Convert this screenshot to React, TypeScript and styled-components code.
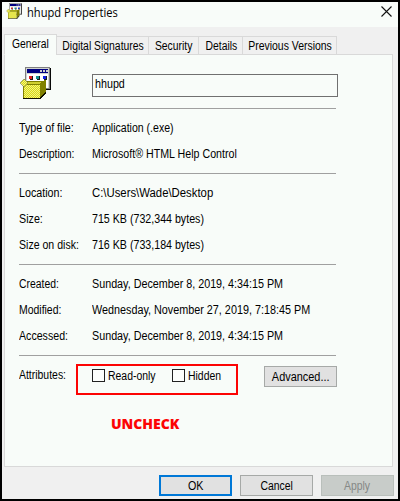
import React from "react";
import styled, { createGlobalStyle } from "styled-components";

const Global = createGlobalStyle`
  *{box-sizing:border-box}
  html,body{margin:0;padding:0}
  body{width:400px;height:501px;overflow:hidden;background:#000;font-family:"Liberation Sans",Arial,sans-serif;font-size:12px;color:#000}
`;
const Window = styled.main`
  width:400px;height:501px;border:2px solid #000;background:#f0f0f0;
  display:flex;flex-direction:column;
`;
const TitleBar = styled.header`
  height:25px;background:#f8fcf9;display:flex;align-items:flex-start;
  padding:1px 6px 0 4px;flex:none;
`;
const Title = styled.h1`
  margin:0 auto 0 5px;font:400 12.5px/19px "Open Sans","Segoe UI",sans-serif;
  color:#000;white-space:nowrap;transform:scaleX(.89);transform-origin:left;
`;
const CloseButton = styled.button`
  border:0;background:none;padding:0;margin-top:3px;height:11px;display:flex;
`;
const Label = styled.span<{ $scale?: number; $centered?: boolean }>`
  display:inline-block;white-space:nowrap;transform:scaleX(${p => p.$scale ?? 0.893});
  transform-origin:${p => (p.$centered ? "center" : "left")};
`;
const Tabs = styled.nav`
  display:flex;align-items:flex-end;height:21px;margin:7px 0 -1px 2px;flex:none;position:relative;
`;
const Tab = styled.button<{ $width: number; $active?: boolean }>`
  width:${p => p.$width}px;height:${p => (p.$active ? 21 : 19)}px;
  margin:0 -1px 0 0;padding:${p => (p.$active ? "0 1px 2px 0" : "1px 0 0 1px")};
  border:1px solid #d9d9d9;${p => p.$active && "border-bottom-color:#f8fcf9;"}
  background:${p => (p.$active ? "#f8fcf9" : "#f0f0f0")};
  font:inherit;color:inherit;display:flex;align-items:center;justify-content:center;
`;
const Panel = styled.section`
  width:389px;height:413px;margin-left:2px;padding:12px 0 0 14px;flex:none;
  border:1px solid #d9d9d9;background:#f8fcf9;
`;
const FileHead = styled.div`
  display:flex;height:41px;width:319px;
`;
const NameInput = styled.div`
  width:246px;height:23px;margin:7px 0 0 41px;border:1px solid #707070;
  padding:1px 0 0 2px;line-height:16px;
`;
const Rule = styled.hr`
  width:317px;height:1px;margin:0;border:0;background:#a0a0a0;
`;
const Group = styled.dl<{ $height: number; $top: number }>`
  margin:0;height:${p => p.$height}px;padding-top:${p => p.$top}px;
`;
const Row = styled.div`
  display:grid;grid-template-columns:73px 1fr;height:26px;line-height:14px;
`;
const Term = styled.dt`margin:0;`;
const Value = styled.dd`margin:0;`;
const Attributes = styled.div`
  display:flex;padding-top:8px;align-items:flex-start;
`;
const AttributeName = styled.div`width:57px;line-height:14px;padding-top:4px;`;
const Highlight = styled.div`
  width:162px;height:31px;border:2px solid #fc0404;display:flex;padding:3px 0 0 14px;
`;
const Option = styled.label<{ $width: number }>`
  width:${p => p.$width}px;height:13px;display:flex;align-items:center;gap:3px;line-height:13px;
  span:last-child{padding-top:1px}
`;
const Box = styled.span`
  width:13px;height:13px;border:1px solid #222;background:#fdfffd;flex:none;
`;
const Button = styled.button<{ $kind?: "default" | "disabled" }>`
  width:73px;height:21px;padding:1px 0 0;font:inherit;flex:none;
  display:flex;align-items:center;justify-content:center;
  border:${p => (p.$kind === "default" ? "2px solid #0078d7" : p.$kind === "disabled" ? "1px solid #b9bfbb" : "1px solid #a6a9a7")};
  background:${p => (p.$kind === "disabled" ? "#c8ccc9" : "#e1e1e1")};
  color:${p => (p.$kind === "disabled" ? "#858886" : "#000")};
`;
const AdvancedSlot = styled.div`margin:2px 0 0 26px;`;
const Note = styled.strong`
  display:block;width:68px;margin:19px 0 0 92px;color:#fc0404;
  font:800 14px/20px "Open Sans","Noto Sans",sans-serif;white-space:nowrap;
`;
const Footer = styled.footer`
  display:flex;justify-content:flex-end;gap:8px;padding:8px 4px 0 0;
`;

function InstallerIcon({ size, id }: { size: number; id: string }) {
  return (
    <svg width={size} height={size} viewBox="0 0 32 32" shapeRendering={size === 32 ? "crispEdges" : "auto"}>
      <defs>
        <pattern id={id} width="2" height="2" patternUnits="userSpaceOnUse">
          <path fill="#d8d818" d="M0 0h2v2H0z" />
          <path fill="#f4f480" d="M0 0h1v1H0zM1 1h1v1H1z" />
        </pattern>
      </defs>
      <path fill="#080808" d="M7 1h25v22H7z" />
      <path fill="#808080" d="M6 0h25v22H6z" />
      <path fill="#d0d4d0" d="M7 1h23v20H7z" />
      <path fill="#fff" d="M8 7h21v14H8z" />
      <path fill="#000080" d="M8 2h21v4H8z" />
      <path fill="#d0d0d0" d="M21 3h2v2h-2zM24 3h2v2h-2zM27 3h2v2h-2z" />
      <path fill="#e02020" d="M10 9h3v3h-3z" />
      <path fill="#109090" d="M17 9h3v3h-3z" />
      <path fill="#1020e0" d="M24 9h3v3h-3z" />
      <path fill="#181818" d="M13 9h1v4h-3v-1h2zM20 9h1v4h-3v-1h2zM27 9h1v4h-3v-1h2z" />
      <path fill="#808080" d="M9 14h5v1H9zM16 14h5v1h-5zM23 14h3v1h-3z" />
      <path fill="#808000" d="M4 17l5-3h17l-5 3z" />
      <path fill="#d0d030" d="M9 15h14l-3 2H7z" />
      <path fill={`url(#${id})`} d="M4 17h17v14H4z" />
      <path fill="#808000" d="M4 17h17v1H4zM4 17h1v14H4z" />
      <path fill="#808000" d="M21 17l4-4h2v11l-6 7z" />
      <path fill="#101000" d="M4 31h17l6-7v2l-5 6H4z" />
      <path fill={`url(#${id})`} stroke="#808040" strokeWidth=".7" d="M5 12l4 4-4 4-4-4z" />
    </svg>
  );
}

type Entry = [term: string, value: string, scale?: number, termScale?: number];

const fileInfo: Entry[] = [["Type of file:", "Application (.exe)", 0.88], ["Description:", "Microsoft® HTML Help Control", 0.888, 0.875]];
const sizeInfo: Entry[] = [["Location:", "C:\\Users\\Wade\\Desktop", 0.945], ["Size:", "715 KB (732,344 bytes)", 0.888], ["Size on disk:", "716 KB (733,184 bytes)", 0.888, 0.88]];
const dateInfo: Entry[] = [["Created:", "Sunday, December 8, 2019, 4:34:15 PM", 0.896, 0.865], ["Modified:", "Wednesday, November 27, 2019, 7:18:45 PM", 0.9, 0.87], ["Accessed:", "Sunday, December 8, 2019, 4:34:15 PM", 0.896, 0.885]];

function Details({ rows, height, top }: { rows: Entry[]; height: number; top: number }) {
  return (
    <Group $height={height} $top={top}>
      {rows.map(([term, value, scale, termScale]) => (
        <Row key={term}><Term><Label $scale={termScale}>{term}</Label></Term><Value><Label $scale={scale}>{value}</Label></Value></Row>
      ))}
    </Group>
  );
}

export default function App() {
  return (
    <>
      <Global />
      <Window>
        <TitleBar>
          <InstallerIcon size={16} id="smallDither" />
          <Title>hhupd Properties</Title>
          <CloseButton aria-label="Close">
            <svg width="11" height="11" viewBox="0 0 11 11"><path d="M.5.5l10 10m0-10l-10 10" stroke="#111" strokeWidth="1.1" /></svg>
          </CloseButton>
        </TitleBar>
        <Tabs>
          <Tab $width={53} $active><Label $centered $scale={0.86}>General</Label></Tab>
          <Tab $width={93}><Label $centered $scale={0.865}>Digital Signatures</Label></Tab>
          <Tab $width={51}><Label $centered $scale={0.865}>Security</Label></Tab>
          <Tab $width={45}><Label $centered $scale={0.865}>Details</Label></Tab>
          <Tab $width={95}><Label $centered $scale={0.87}>Previous Versions</Label></Tab>
        </Tabs>
        <Panel>
          <FileHead>
            <InstallerIcon size={32} id="largeDither" />
            <NameInput><Label>hhupd</Label></NameInput>
          </FileHead>
          <Rule />
          <Details rows={fileInfo} height={64} top={12} />
          <Rule />
          <Details rows={sizeInfo} height={90} top={12} />
          <Rule />
          <Details rows={dateInfo} height={90} top={12} />
          <Rule />
          <Attributes>
            <AttributeName><Label $scale={0.87}>Attributes:</Label></AttributeName>
            <Highlight>
              <Option $width={80}><Box /><Label $scale={0.87}>Read-only</Label></Option>
              <Option $width={60}><Box /><Label $scale={0.87}>Hidden</Label></Option>
            </Highlight>
            <AdvancedSlot><Button><Label $centered $scale={0.91}>Advanced...</Label></Button></AdvancedSlot>
          </Attributes>
          <Note>UNCHECK</Note>
        </Panel>
        <Footer>
          <Button $kind="default"><Label $centered>OK</Label></Button>
          <Button><Label $centered $scale={0.865}>Cancel</Label></Button>
          <Button $kind="disabled"><Label $centered $scale={0.87}>Apply</Label></Button>
        </Footer>
      </Window>
    </>
  );
}
